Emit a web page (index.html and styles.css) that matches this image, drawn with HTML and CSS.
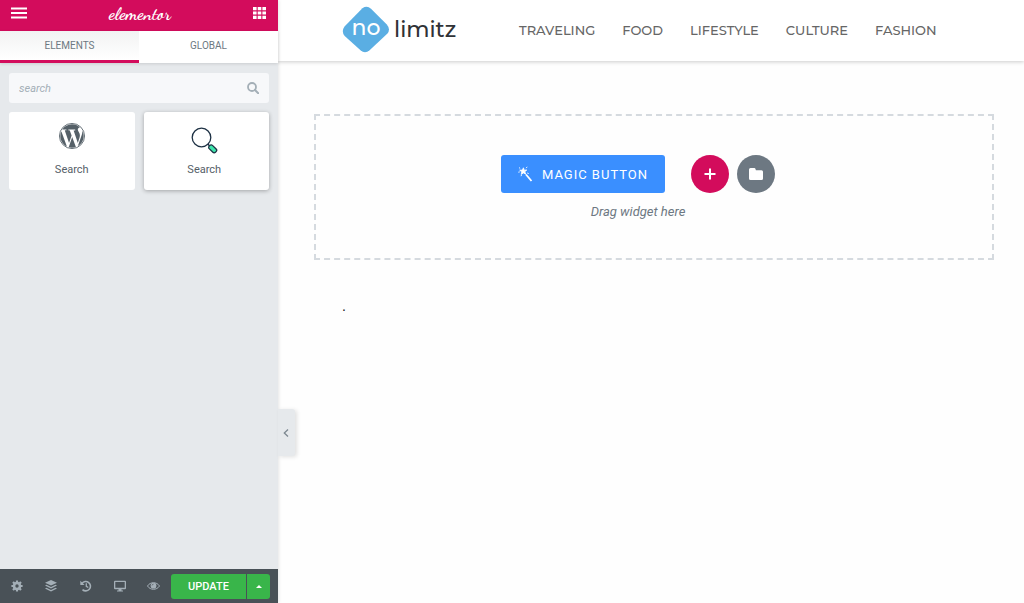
FILE: index.html
```html
<!DOCTYPE html>
<html lang="en">

<head>
  <meta charset="UTF-8">
  <meta name="viewport" content="width=device-width, initial-scale=1.0">
  <title>Elementor</title>
  <link rel="stylesheet" href="styles.css">
</head>

<body>

  <aside class="panel">
    <header class="panel-header">
      <button class="icon-btn" type="button" aria-label="Menu">
        <svg width="16" height="12" viewBox="0 0 16 12"><path d="M0 1.500h16M0 6h16M0 10.500h16" stroke="currentColor" stroke-width="2.200"/></svg>
      </button>
      <div class="panel-logo">elementor</div>
      <button class="icon-btn" type="button" aria-label="Widgets">
        <svg width="13" height="12" viewBox="0 0 13 12" fill="currentColor"><path d="M0 0h3.6v3.2H0zM4.7 0h3.6v3.2H4.7zM9.4 0H13v3.2H9.4zM0 4.4h3.6v3.2H0zM4.7 4.4h3.6v3.2H4.7zM9.4 4.4H13v3.2H9.4zM0 8.8h3.6V12H0zM4.7 8.8h3.6V12H4.7zM9.4 8.8H13V12H9.4z"/></svg>
      </button>
    </header>

    <div class="tabs">
      <button class="tab active" type="button">ELEMENTS</button>
      <button class="tab" type="button">GLOBAL</button>
    </div>

    <div class="panel-content">
      <div class="search-box">
        <input id="search" class="search-input" type="text" placeholder="search" aria-label="search">
        <label for="search" class="search-icon" aria-label="search">
          <svg width="12" height="12" viewBox="0 0 12 12" fill="none" stroke="currentColor"><circle cx="5" cy="5" r="4" stroke-width="1.8"/><path d="M8 8l3.2 3.2" stroke-width="2" stroke-linecap="round"/></svg>
        </label>
      </div>

      <div class="widgets">
        <button class="widget" type="button">
          <span class="widget-icon">
            <svg width="26" height="26" viewBox="0 0 24 24" fill="#556068"><circle cx="12" cy="12" r="11.6" fill="none" stroke="#556068" stroke-width=".8"/><path d="M21.469 6.825c.84 1.537 1.318 3.3 1.318 5.175 0 3.979-2.156 7.456-5.363 9.325l3.295-9.527c.615-1.54.82-2.771.82-3.864 0-.405-.026-.78-.07-1.11m-7.981.105c.647-.03 1.232-.105 1.232-.105.582-.075.514-.93-.067-.899 0 0-1.755.135-2.88.135-1.064 0-2.85-.15-2.85-.15-.585-.03-.661.855-.075.885 0 0 .54.061 1.125.09l1.68 4.605-2.37 7.08L5.354 6.9c.649-.03 1.234-.1 1.234-.1.585-.075.516-.93-.065-.896 0 0-1.746.138-2.874.138-.2 0-.438-.008-.69-.015C4.911 3.15 8.235 1.215 12 1.215c2.809 0 5.365 1.072 7.286 2.833-.046-.003-.091-.009-.141-.009-1.06 0-1.812.923-1.812 1.914 0 .89.513 1.643 1.06 2.531.411.72.89 1.643.89 2.977 0 .915-.354 1.994-.821 3.479l-1.075 3.585-3.9-11.61zM12 22.784c-1.059 0-2.081-.153-3.048-.437l3.237-9.406 3.315 9.087c.024.053.05.101.078.149-1.12.393-2.325.609-3.582.609M1.211 12c0-1.564.336-3.05.935-4.39L7.29 21.709C3.694 19.96 1.212 16.271 1.211 12"/></svg>
          </span>
          Search
        </button>
        <button class="widget raised" type="button">
          <span class="widget-icon low">
            <svg width="27" height="27" viewBox="0 0 27 27" fill="none" stroke="#1d3144"><circle cx="10.5" cy="10.5" r="9.3" stroke-width="1.3"/><path d="M16.8 17l1.7 1.7" stroke-width="1.5"/><rect x="-1.2" y="-2.3" width="8.8" height="4.6" rx="1.8" transform="translate(19.4 19.6) rotate(45)" fill="#3ee6ac" stroke-width="1.3"/></svg>
          </span>
          Search
        </button>
      </div>
    </div>

    <footer class="panel-footer">
      <div class="tools">
        <button class="tool" type="button" aria-label="Settings">
          <svg width="12" height="12" viewBox="0 0 12 12" fill="none" stroke="currentColor"><circle cx="6" cy="6" r="3" stroke-width="2.6"/><path d="M6 .4v2M6 9.6v2M.4 6h2M9.6 6h2M2 2l1.4 1.4M8.6 8.6L10 10M10 2L8.6 3.4M3.4 8.6L2 10" stroke-width="2.2"/></svg>
        </button>
        <button class="tool" type="button" aria-label="Navigator">
          <svg width="12" height="12" viewBox="0 0 12 12" fill="currentColor"><path d="M6 0l6 2.8-6 2.8-6-2.8zM1.5 4.8L6 6.9l4.5-2.1 1.5.8L6 8.5 0 5.6zM1.5 7.8L6 9.9l4.5-2.1 1.5.8L6 11.6 0 8.6z"/></svg>
        </button>
        <button class="tool" type="button" aria-label="History">
          <svg width="12" height="12" viewBox="0 0 12 12" fill="none" stroke="currentColor" stroke-width="1.6"><path d="M2 3.4A4.7 4.7 0 1 1 2.5 9.6"/><path d="M6.3 3.3v3l2 1.2" stroke-width="1.3"/><path d="M.3.8v4.3h4.3z" fill="currentColor" stroke="none"/></svg>
        </button>
        <button class="tool" type="button" aria-label="Responsive mode">
          <svg width="12" height="12" viewBox="0 0 12 12" fill="currentColor"><path fill-rule="evenodd" d="M1 .8h10a1 1 0 0 1 1 1v6.400a1 1 0 0 1-1 1H7.500v1.200H9v1H3v-1h1.500V9.200H1a1 1 0 0 1-1-1V1.800a1 1 0 0 1 1-1zM1.300 2v5.800h9.400V2z"/></svg>
        </button>
        <button class="tool" type="button" aria-label="Preview">
          <svg width="13" height="12" viewBox="0 0 13 12"><path d="M.5 6C3.200 1.600 9.800 1.600 12.500 6 9.800 10.400 3.200 10.400.5 6z" fill="none" stroke="currentColor"/><circle cx="6.500" cy="5.700" r="2.900" fill="currentColor"/><path d="M5 5.500A1.500 1.500 0 0 1 6.500 4.200" fill="none" stroke="#495157" stroke-width=".7"/></svg>
        </button>
      </div>
      <div class="update-group">
        <button class="update" type="button">UPDATE</button>
        <button class="update-more" type="button" aria-label="Save options">
          <svg width="6" height="3" viewBox="0 0 6 3"><path d="M3 0l3 3H0z" fill="currentColor"/></svg>
        </button>
      </div>
    </footer>

    <button class="collapse" type="button" aria-label="Hide panel">
      <svg width="6" height="8" viewBox="0 0 6 8"><path d="M5 .5L1.300 4 5 7.500" fill="none" stroke="currentColor" stroke-width="1.300"/></svg>
    </button>
  </aside>

  <main class="preview">
    <header class="site-header">
      <a class="brand" href="#">
        <span class="brand-mark">
          <svg class="brand-shape" width="48" height="48" viewBox="0 0 48 48"><path d="M20.4 2.200Q25 -.8 29 2.700L44.800 18.400Q48.800 23 45.500 27.400L27.600 44.300Q23 48 18.500 44.300L2.700 30Q-1 25.500 2.500 20.500Z" fill="#5aaee3"/></svg>
          <span class="brand-no">no</span>
        </span>
        <span class="brand-name">limitz</span>
      </a>
      <nav class="site-nav">
        <a href="#">TRAVELING</a>
        <a href="#">FOOD</a>
        <a href="#">LIFESTYLE</a>
        <a href="#">CULTURE</a>
        <a href="#">FASHION</a>
      </nav>
    </header>

    <section class="drop-area">
      <div class="drop-buttons">
        <button class="magic" type="button">
          <svg width="15" height="16" viewBox="0 0 15 16" fill="none" stroke="currentColor"><path d="M8 8.500l5.500 6.500" stroke-width="1.800"/><path d="M5.400 1.800l.8 2.400 2.600-.2-2 1.700 1 2.500-2.400-1.300-2.200 1.500.6-2.600-2.100-1.600 2.700-.1z" fill="currentColor" stroke-width=".8"/><path d="M1 1.500l1.200 1M9.200.8l-1 1.300M.3 6.200l1.500-.3M9.200 7l1.500.6M3 10.200l.6-1.400" stroke-width=".9"/></svg>
          MAGIC BUTTON
        </button>
        <button class="round add" type="button" aria-label="Add new section">
          <svg width="12" height="12" viewBox="0 0 12 12"><path d="M6 .5v11M.5 6h11" stroke="currentColor" stroke-width="2"/></svg>
        </button>
        <button class="round folder" type="button" aria-label="Add template">
          <svg width="14" height="12" viewBox="0 0 14 12" fill="currentColor"><path d="M1.500 0h3.800q.9 0 1.200.9l.4 1.300h5.600q1.500 0 1.500 1.500v6.800q0 1.500-1.500 1.500h-11Q0 12 0 10.500v-9Q0 0 1.500 0z"/></svg>
        </button>
      </div>
      <p class="drop-text">Drag widget here</p>
    </section>

    <p class="page-text">.</p>
  </main>

</body>

</html>
```

FILE: styles.css
```css
* {
  box-sizing: border-box;
}

body {
  margin: 0;
  display: flex;
  min-height: 100vh;
  background-color: #fefefe;
  font-family: Roboto, "Liberation Sans", sans-serif;
}

button {
  padding: 0;
  border: none;
  background: none;
  font-family: inherit;
  cursor: pointer;
}

svg {
  display: block;
}

/* panel */
.panel {
  position: relative;
  display: flex;
  flex-direction: column;
  flex: none;
  width: 278px;
  background-color: #e6e9ec;
  box-shadow: 0 0 4px rgba(0, 0, 0, 0.15);
}

.panel-header {
  display: flex;
  align-items: center;
  justify-content: space-between;
  height: 31px;
  padding: 0 12px 5px 11px;
  background-color: #d30c5c;
  color: white;
}

.icon-btn {
  color: white;
}

.panel-logo {
  font-family: "Dancing Script", Lato, cursive;
  font-size: 18px;
  font-weight: bold;
  line-height: 20px;
}

.tabs {
  display: flex;
  box-shadow: 0 1px 3px rgba(0, 0, 0, 0.12);
}

.tab {
  flex: 1;
  height: 32px;
  border-bottom: 3px solid white;
  background-color: white;
  font-size: 10px;
  color: #6d7882;
}

.tab.active {
  border-bottom-color: #d30c5c;
  background-image: linear-gradient(#f2f3f3, #fff);
}

.panel-content {
  flex: 1;
  padding: 10px 9px;
}

.search-box {
  display: flex;
  align-items: center;
  height: 30px;
  padding: 0 10px;
  border-radius: 3px;
  background-color: #f7f8fa;
  color: #a4afb7;
}

.search-input {
  flex: 1;
  min-width: 0;
  padding: 0;
  border: none;
  outline: none;
  background: none;
  font-family: inherit;
  font-size: 11px;
  font-style: italic;
  color: #6d7882;
}

.search-input::placeholder {
  color: #a4afb7;
}

.widgets {
  display: grid;
  grid-template-columns: 1fr 1fr;
  gap: 9px;
  margin-top: 9px;
}

.widget {
  display: flex;
  flex-direction: column;
  align-items: center;
  height: 78px;
  padding-top: 11px;
  border-radius: 3px;
  background-color: white;
  font-size: 11px;
  line-height: 14px;
  color: #556068;
}

.widget.raised {
  padding-right: 4px;
  box-shadow: 0 1px 4px rgba(0, 0, 0, 0.3);
}

.widget-icon {
  height: 40px;
}

.widget-icon.low {
  padding-top: 4px;
}

.panel-footer {
  display: flex;
  align-items: center;
  height: 34px;
  padding-right: 8px;
  background-color: #495157;
}

.tools {
  display: flex;
  flex: 1;
}

.tool {
  display: flex;
  flex: 1;
  justify-content: center;
  color: #a4afb7;
}

.update-group {
  display: flex;
  gap: 1px;
  height: 25px;
}

.update,
.update-more {
  display: flex;
  align-items: center;
  justify-content: center;
  background-color: #39b54a;
  color: white;
}

.update {
  width: 75px;
  border-radius: 3px 0 0 3px;
  font-size: 11px;
  font-weight: 500;
}

.update-more {
  width: 23px;
  border-radius: 0 3px 3px 0;
}

/* handle on the edge of the panel */
.collapse {
  position: absolute;
  top: 409px;
  left: 100%;
  display: flex;
  align-items: center;
  justify-content: center;
  width: 17px;
  height: 47px;
  padding-right: 2px;
  border-radius: 0 3px 3px 0;
  background-color: #e6e9ec;
  box-shadow: 2px 1px 4px rgba(0, 0, 0, 0.12);
  color: #7d8891;
}

/* preview */
.preview {
  flex: 1;
  min-width: 0;
}

.site-header {
  display: flex;
  align-items: center;
  height: 61px;
  padding: 0 0 2px 64px;
  background-color: white;
  box-shadow: 0 1px 4px rgba(0, 0, 0, 0.2);
}

.brand {
  display: flex;
  align-items: center;
  gap: 4px;
  width: 177px;
  font-family: Montserrat, Inter, sans-serif;
  font-size: 22px;
  font-weight: 500;
  text-decoration: none;
  color: #303236;
}

.brand-mark {
  display: grid;
  place-items: center;
}

.brand-shape,
.brand-no {
  grid-area: 1 / 1;
}

.brand-no {
  padding-bottom: 4px;
  line-height: 24px;
  color: white;
}

.site-nav {
  display: flex;
  gap: 27px;
  font-family: Montserrat, Inter, sans-serif;
  font-size: 13px;
  font-weight: 500;
}

.site-nav a {
  text-decoration: none;
  color: #666;
}

.drop-area {
  margin: 53px 30px 0 36px;
  padding: 39px 32px 37px 0;
  border: 2px dashed #d5dadf;
}

.drop-buttons {
  display: flex;
  align-items: center;
  justify-content: center;
}

.magic {
  display: flex;
  align-items: center;
  gap: 9px;
  height: 38px;
  margin-right: 26px;
  padding: 0 17px;
  border-radius: 3px;
  background-color: #3a8fff;
  font-size: 13px;
  letter-spacing: 1px;
  color: white;
}

.round {
  display: flex;
  align-items: center;
  justify-content: center;
  width: 38px;
  height: 38px;
  border-radius: 50%;
  color: white;
}

.add {
  margin-right: 8px;
  background-color: #d30c5c;
}

.folder {
  background-color: #6d7882;
}

.drop-text {
  margin: 10px 0 0;
  font-size: 13px;
  font-style: italic;
  line-height: 18px;
  text-align: center;
  color: #6d7882;
}

.page-text {
  margin: 37px 64px 0;
  font-family: "Liberation Sans", Arial, sans-serif;
  font-size: 14px;
  line-height: 18px;
  color: #222;
}
```
